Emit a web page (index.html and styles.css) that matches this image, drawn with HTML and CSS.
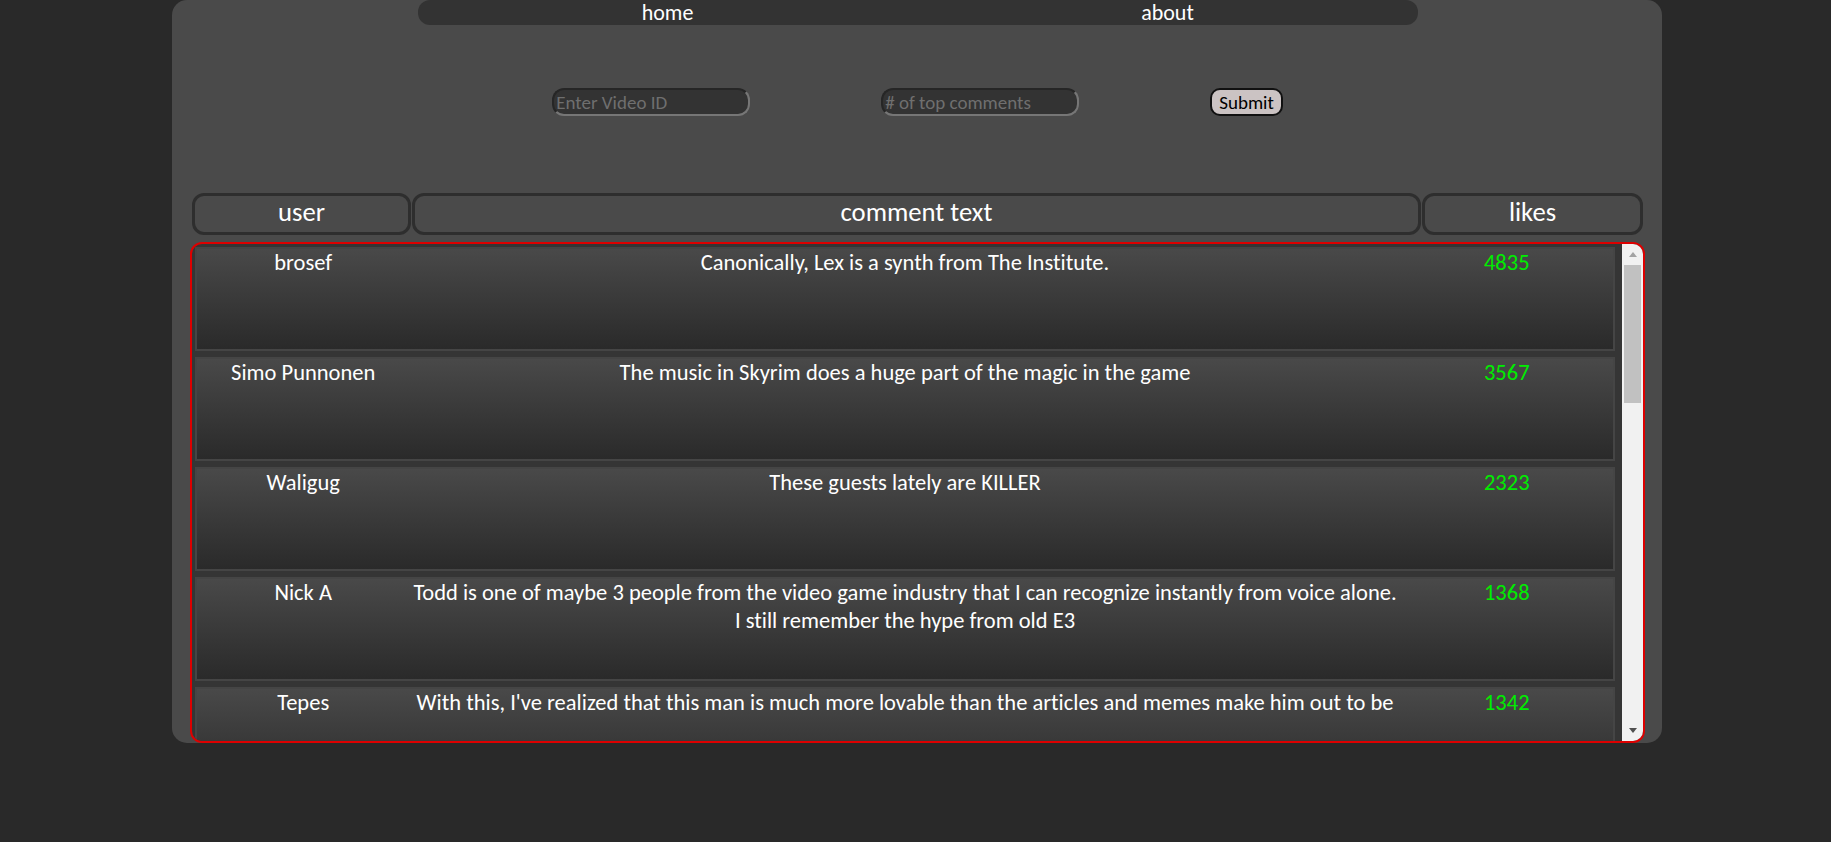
FILE: index.html
```html
<!DOCTYPE html>
<html lang="en">
<head>
<meta charset="utf-8">
<title>Top Comments</title>
<link rel="stylesheet" href="styles.css">
</head>
<body>
<div class="app">
  <nav class="nav">
    <a class="nav-link" href="#">home</a>
    <a class="nav-link" href="#">about</a>
  </nav>
  <form class="query">
    <input class="field" type="text" placeholder="Enter Video ID">
    <input class="field" type="text" placeholder="# of top comments">
    <button class="submit" type="button">Submit</button>
  </form>
  <div class="head">
    <div class="head-cell">user</div>
    <div class="head-cell">comment text</div>
    <div class="head-cell">likes</div>
  </div>
  <div class="scroll">
    <div class="list">
      <div class="row"><div class="user">brosef</div><div class="text">Canonically, Lex is a synth from The Institute.</div><div class="likes">4835</div></div>
      <div class="row"><div class="user">Simo Punnonen</div><div class="text">The music in Skyrim does a huge part of the magic in the game</div><div class="likes">3567</div></div>
      <div class="row"><div class="user">Waligug</div><div class="text">These guests lately are KILLER</div><div class="likes">2323</div></div>
      <div class="row"><div class="user">Nick A</div><div class="text">Todd is one of maybe 3 people from the video game industry that I can recognize instantly from voice alone.<br>I still remember the hype from old E3</div><div class="likes">1368</div></div>
      <div class="row"><div class="user">Tepes</div><div class="text">With this, I've realized that this man is much more lovable than the articles and memes make him out to be</div><div class="likes">1342</div></div>
    </div>
    <div class="scrollbar">
      <div class="sb-btn"><span class="arrow-up"></span></div>
      <div class="sb-track"><div class="sb-thumb"></div></div>
      <div class="sb-btn"><span class="arrow-down"></span></div>
    </div>
  </div>
</div>
</body>
</html>
```

FILE: styles.css
```css
* {
  box-sizing: border-box;
}

html, body {
  height: 100%;
}

body {
  margin: 0;
  padding: 0 0 0 3px;
  background: #292929;
  font-family: Carlito, Calibri, Lato, "Noto Sans", sans-serif;
  font-variant-ligatures: none;
  color: #ffffff;
  overflow: hidden;
}

.app {
  width: 1490px;
  height: 743px;
  margin: 0 auto;
  padding: 0 19px 0 20px;
  background: #4a4a4a;
  border-radius: 15px;
  display: flex;
  flex-direction: column;
}

.nav {
  align-self: center;
  width: 1000px;
  height: 25px;
  display: flex;
  background: #333333;
  border-radius: 12px;
}

.nav-link {
  flex: 1;
  text-align: center;
  color: #ffffff;
  text-decoration: none;
  font-size: 22px;
  line-height: 25px;
}

.query {
  margin: 63px 0 0;
  display: flex;
  justify-content: center;
  gap: 131px;
  height: 28px;
}

.field {
  width: 198px;
  height: 28px;
  padding: 0 2px;
  background: #333333;
  color: #ffffff;
  font-family: inherit;
  font-size: 19px;
  border: 2px solid;
  border-color: #262626 #767676 #767676 #262626;
  border-radius: 12px;
  outline: none;
}

.field::placeholder {
  color: #6f6f6f;
}

.submit {
  height: 28px;
  padding: 0 7px;
  background: #cbc3c3;
  color: #000000;
  font-family: inherit;
  font-size: 19px;
  border: 2px solid #111111;
  border-radius: 10px;
}

.head {
  margin-top: 77px;
  height: 42px;
  display: grid;
  grid-template-columns: 219px 1fr 221px;
  gap: 1px;
}

.head-cell {
  border: 3px solid #2e2e2e;
  border-radius: 12px;
  text-align: center;
  font-size: 26.7px;
  line-height: 32px;
}

.scroll {
  margin: 7px -2px 0;
  flex: 1;
  min-height: 0;
  border: 2px solid #dd0000;
  border-radius: 12px;
  background: #353535;
  display: flex;
  overflow: hidden;
}

.list {
  flex: 1;
  min-width: 0;
  display: flex;
  flex-direction: column;
  gap: 6px;
  padding: 3px 7px 3px 3px;
  overflow: hidden;
}

.row {
  flex-shrink: 0;
  height: 104px;
  border: 2px solid #454545;
  background: linear-gradient(#494949, #2a2a2a);
  display: grid;
  grid-template-columns: 15% 70% 15%;
  font-size: 22.5px;
  line-height: 28px;
  text-align: center;
}

.text {
  white-space: nowrap;
}

.likes {
  color: #00ee00;
}

.scrollbar {
  flex: 0 0 21px;
  display: flex;
  flex-direction: column;
  background: #f1f1f1;
}

.sb-btn {
  flex: 0 0 21px;
  display: flex;
  align-items: center;
  justify-content: center;
}

.arrow-up {
  width: 0;
  height: 0;
  border-left: 4.5px solid transparent;
  border-right: 4.5px solid transparent;
  border-bottom: 5px solid #a3a3a3;
}

.arrow-down {
  width: 0;
  height: 0;
  border-left: 4.5px solid transparent;
  border-right: 4.5px solid transparent;
  border-top: 5px solid #505050;
}

.sb-track {
  flex: 1;
  padding: 0 2px;
}

.sb-thumb {
  height: 138px;
  background: #c1c1c1;
}
```
